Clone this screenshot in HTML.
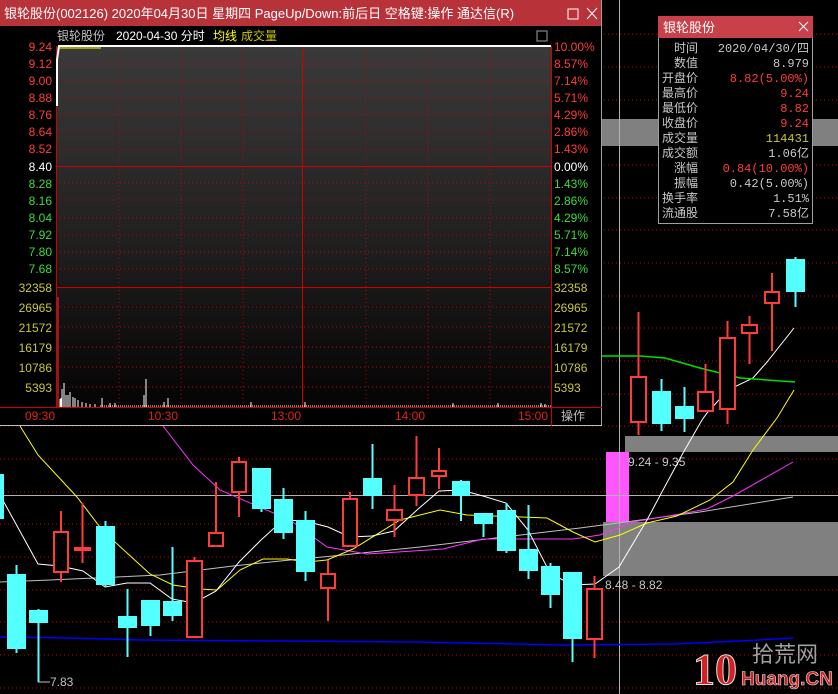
<!DOCTYPE html>
<html><head><meta charset="utf-8"><style>
html,body{margin:0;padding:0;background:#000;}
svg{display:block;font-family:"Liberation Sans","Noto Sans CJK SC",sans-serif;}
</style></head><body>
<svg width="838" height="694" viewBox="0 0 838 694" xmlns="http://www.w3.org/2000/svg">
<rect width="838" height="694" fill="#000"/>
<!-- background dotted grid -->
<g stroke="#c00000" stroke-dasharray="1,3" stroke-width="1">
<line x1="0" y1="34" x2="838" y2="34"/><line x1="0" y1="67" x2="838" y2="67"/><line x1="0" y1="100" x2="838" y2="100"/>
<line x1="0" y1="132" x2="838" y2="132"/><line x1="0" y1="165" x2="838" y2="165"/><line x1="0" y1="198" x2="838" y2="198"/>
<line x1="0" y1="230" x2="838" y2="230"/><line x1="0" y1="263" x2="838" y2="263"/><line x1="0" y1="296" x2="838" y2="296"/>
<line x1="0" y1="328" x2="838" y2="328"/><line x1="0" y1="361" x2="838" y2="361"/><line x1="0" y1="394" x2="838" y2="394"/>
<line x1="0" y1="426" x2="838" y2="426"/><line x1="0" y1="459" x2="838" y2="459"/><line x1="0" y1="492" x2="838" y2="492"/>
<line x1="0" y1="524" x2="838" y2="524"/><line x1="0" y1="557" x2="838" y2="557"/><line x1="0" y1="590" x2="838" y2="590"/>
<line x1="0" y1="622" x2="838" y2="622"/><line x1="0" y1="655" x2="838" y2="655"/><line x1="0" y1="688" x2="838" y2="688"/>
</g>
<!-- gray boxes -->
<rect x="600" y="119" width="238" height="27" fill="#808080"/>
<rect x="625" y="436" width="213" height="16" fill="#808080"/>
<rect x="603" y="522" width="235" height="54" fill="#808080"/>
<rect x="606" y="452" width="23" height="70" fill="#ff55ff"/>
<!-- crosshair -->
<line x1="0" y1="495.5" x2="838" y2="495.5" stroke="#b0b0b0" stroke-width="1"/>
<line x1="619.5" y1="0" x2="619.5" y2="694" stroke="#b0b0b0" stroke-width="1"/>
<text x="628" y="466" fill="#c8c8c8" font-size="12">9.24 - 9.35</text>
<text x="605" y="589" fill="#c8c8c8" font-size="12">8.48 - 8.82</text>
<!-- MA lines -->
<polyline fill="none" stroke="#0000ff" stroke-width="1.5" points="0,637 70,638 140,640 280,641 420,642 562,645 673,644 740,641 793,638"/>
<polyline fill="none" stroke="#c0c0c0" stroke-width="1" points="0,582 50,580 160,575 233,566 290,560 333,556 420,547 580,528 633,521 700,512 793,497"/>
<polyline fill="none" stroke="#ff33ff" stroke-width="1" points="163,426 193,465 220,490 257,506 290,520 327,547 367,554 443,549 483,539 573,539 600,535 633,522 680,514 707,509 733,496 793,462"/>
<polyline fill="none" stroke="#ffff00" stroke-width="1" points="20,426 38,455 77,497 103,531 150,574 173,585 200,589 217,590 240,570 263,559 287,559 307,562 327,560 353,549 400,520 440,510 467,515 547,518 573,532 595,542 620,535 647,523 677,516 710,500 733,482 753,450 777,418 794,390"/>
<polyline fill="none" stroke="#ffffff" stroke-width="1" points="0,495 38,564 60,566 83,571 105,587 127,583 150,583 172,599 194,603 216,591 239,562 261,540 283,520 305,521 328,527 350,537 372,536 394,531 417,510 439,491 461,490 483,496 506,503 528,530 550,573 572,585 595,584 619,567 647,520 663,490 683,453 702,420 707,413 728,390 753,378 767,362 794,328"/>
<polyline fill="none" stroke="#00e000" stroke-width="1.5" points="602,356 640,356 665,358 700,368 740,378 795,382"/>
<!-- candles cyan -->
<g stroke="#54ffff" stroke-width="2" fill="#54ffff">
<line x1="2" y1="475" x2="2" y2="518"/><rect x="0" y="475" width="3" height="43"/>
<line x1="16.5" y1="565" x2="16.5" y2="653"/><rect x="8" y="575" width="17" height="73"/>
<line x1="38.5" y1="609" x2="38.5" y2="682"/><rect x="30" y="611" width="17" height="11"/>
<line x1="105.5" y1="521" x2="105.5" y2="587"/><rect x="97" y="527" width="17" height="57"/>
<line x1="127.5" y1="589" x2="127.5" y2="657"/><rect x="119" y="617" width="17" height="10"/>
<line x1="150.5" y1="601" x2="150.5" y2="636"/><rect x="142" y="601" width="17" height="24"/>
<line x1="172.5" y1="547" x2="172.5" y2="621"/><rect x="164" y="602" width="17" height="13"/>
<line x1="261.5" y1="469" x2="261.5" y2="512"/><rect x="253" y="469" width="17" height="39"/>
<line x1="283.5" y1="488" x2="283.5" y2="539"/><rect x="275" y="500" width="17" height="32"/>
<line x1="305.5" y1="511" x2="305.5" y2="581"/><rect x="297" y="521" width="17" height="50"/>
<line x1="372.5" y1="444" x2="372.5" y2="509"/><rect x="364" y="479" width="17" height="16"/>
<line x1="461" y1="480" x2="461" y2="521"/><rect x="453" y="482" width="16" height="13"/>
<line x1="483.5" y1="514" x2="483.5" y2="537"/><rect x="475" y="514" width="17" height="9"/>
<line x1="506.5" y1="503" x2="506.5" y2="553"/><rect x="498" y="511" width="17" height="39"/>
<line x1="528.5" y1="505" x2="528.5" y2="579"/><rect x="520" y="550" width="17" height="20"/>
<line x1="550.5" y1="563" x2="550.5" y2="608"/><rect x="542" y="567" width="17" height="27"/>
<line x1="572.5" y1="573" x2="572.5" y2="662"/><rect x="564" y="573" width="17" height="65"/>
<line x1="661.5" y1="379" x2="661.5" y2="431"/><rect x="653" y="392" width="17" height="31"/>
<line x1="684.5" y1="387" x2="684.5" y2="432"/><rect x="676" y="407" width="17" height="11"/>
<line x1="795.5" y1="257" x2="795.5" y2="307"/><rect x="787" y="260" width="17" height="31"/>
</g>
<!-- candles red -->
<g stroke="#ff3c3c" stroke-width="2" fill="#000">
<line x1="61" y1="511" x2="61" y2="582"/><rect x="54" y="532" width="14" height="40"/>
<line x1="82.5" y1="503" x2="82.5" y2="563"/><rect x="75" y="548" width="15" height="2"/>
<line x1="194.5" y1="557" x2="194.5" y2="638"/><rect x="187" y="561" width="15" height="76"/>
<line x1="216" y1="482" x2="216" y2="547"/><rect x="209" y="533" width="14" height="13"/>
<line x1="239" y1="457" x2="239" y2="517"/><rect x="232" y="462" width="14" height="30"/>
<line x1="328" y1="560" x2="328" y2="621"/><rect x="321" y="574" width="14" height="14"/>
<line x1="350" y1="492" x2="350" y2="547"/><rect x="343" y="499" width="14" height="47"/>
<line x1="394.5" y1="485" x2="394.5" y2="537"/><rect x="387" y="510" width="15" height="10"/>
<line x1="416.5" y1="436" x2="416.5" y2="506"/><rect x="409" y="478" width="15" height="17"/>
<line x1="439" y1="448" x2="439" y2="489"/><rect x="432" y="471" width="14" height="5"/>
<line x1="594.5" y1="576" x2="594.5" y2="658"/><rect x="587" y="589" width="15" height="50"/>
<line x1="638.5" y1="312" x2="638.5" y2="435"/><rect x="631" y="377" width="15" height="45"/>
<line x1="705.5" y1="364" x2="705.5" y2="412"/><rect x="698" y="392" width="15" height="19"/>
<line x1="727.5" y1="321" x2="727.5" y2="424"/><rect x="720" y="338" width="15" height="71"/>
<line x1="749.5" y1="316" x2="749.5" y2="364"/><rect x="742" y="325" width="15" height="8"/>
<line x1="772" y1="273" x2="772" y2="351"/><rect x="765" y="292" width="14" height="11"/>
</g>
<line x1="38" y1="682" x2="50" y2="682" stroke="#c0c0c0"/>
<text x="50" y="686" fill="#c0c0c0" font-size="12">7.83</text>
<!-- watermark -->
<text x="693" y="684" fill="#d42020" font-size="44" font-weight="bold" font-family="Liberation Serif,serif" stroke="#e0e0e0" stroke-width="1">10</text>
<text x="752" y="662" fill="#a0a0a0" font-size="22" font-family="Noto Sans CJK SC,sans-serif">拾荒网</text>
<text x="741" y="685" fill="#d42020" font-size="19" font-weight="bold" stroke="#e0e0e0" stroke-width="0.6">Huang.CN</text>

<!-- popup window -->
<defs><linearGradient id="g" x1="0" y1="0" x2="0" y2="1">
<stop offset="0" stop-color="#3a3a3a"/><stop offset="0.5" stop-color="#222"/><stop offset="1" stop-color="#040404"/></linearGradient></defs>
<rect x="0" y="0" width="602" height="426" fill="#000"/>
<rect x="0" y="0" width="602" height="26" fill="#b8323a"/>
<text x="4" y="18" fill="#fff" font-size="13">银轮股份(002126) 2020年04月30日 星期四 PageUp/Down:前后日 空格键:操作 通达信(R)</text>
<rect x="568" y="9" width="10" height="10" fill="none" stroke="#fff"/>
<path d="M587 8 L597 19 M597 8 L587 19" stroke="#fff"/>
<line x1="601.5" y1="0" x2="601.5" y2="426" stroke="#a0a0a0"/>
<line x1="0" y1="425.5" x2="602" y2="425.5" stroke="#c0c0c0"/>
<text x="57" y="40" fill="#c0c0c0" font-size="12">银轮股份</text>
<text x="116" y="40" fill="#fff" font-size="12">2020-04-30 分时</text>
<text x="213" y="40" fill="#ffff00" font-size="12">均线</text>
<text x="241" y="40" fill="#c8c800" font-size="12">成交量</text>
<rect x="537" y="31" width="10" height="10" fill="none" stroke="#a0a0a0"/>
<rect x="56" y="46" width="495" height="361" fill="url(#g)"/>
<g stroke="#c00000" stroke-dasharray="1,3">
<line x1="56" y1="64" x2="551" y2="64"/><line x1="56" y1="81" x2="551" y2="81"/><line x1="56" y1="98" x2="551" y2="98"/>
<line x1="56" y1="115" x2="551" y2="115"/><line x1="56" y1="132" x2="551" y2="132"/><line x1="56" y1="149" x2="551" y2="149"/>
<line x1="56" y1="183" x2="551" y2="183"/><line x1="56" y1="200" x2="551" y2="200"/><line x1="56" y1="218" x2="551" y2="218"/>
<line x1="56" y1="235" x2="551" y2="235"/><line x1="56" y1="252" x2="551" y2="252"/><line x1="56" y1="269" x2="551" y2="269"/>
<line x1="56" y1="307" x2="551" y2="307"/><line x1="56" y1="327" x2="551" y2="327"/><line x1="56" y1="347" x2="551" y2="347"/>
<line x1="56" y1="367" x2="551" y2="367"/><line x1="56" y1="387" x2="551" y2="387"/>
<line x1="119" y1="46" x2="119" y2="407"/><line x1="181" y1="46" x2="181" y2="407"/><line x1="243" y1="46" x2="243" y2="407"/>
<line x1="366" y1="46" x2="366" y2="407"/><line x1="428" y1="46" x2="428" y2="407"/><line x1="490" y1="46" x2="490" y2="407"/>
</g>
<g stroke="#d00000" stroke-width="1">
<line x1="56" y1="166.5" x2="551" y2="166.5"/><line x1="56" y1="287.5" x2="551" y2="287.5"/>
<line x1="0" y1="407.5" x2="602" y2="407.5"/>
<line x1="302.5" y1="46" x2="302.5" y2="407"/>
<line x1="56.5" y1="46" x2="56.5" y2="407"/>
<line x1="551.5" y1="46" x2="551.5" y2="426"/>
</g>
<polyline fill="none" stroke="#fff" stroke-width="2" points="57,106 57,60 59,46 551,46"/>
<line x1="59" y1="48" x2="101" y2="48" stroke="#ffff00"/>
<!-- volume bars -->
<line x1="58" y1="297" x2="58" y2="407" stroke="#ff3030"/>
<g stroke="#fff" stroke-width="1">
<line x1="60" y1="399" x2="60" y2="407"/><line x1="61" y1="398" x2="61" y2="407"/><line x1="62" y1="389" x2="62" y2="407"/>
<line x1="64" y1="383" x2="64" y2="407"/><line x1="66" y1="395" x2="66" y2="407"/><line x1="68" y1="395" x2="68" y2="407"/>
<line x1="70" y1="392" x2="70" y2="407"/><line x1="73" y1="397" x2="73" y2="407"/><line x1="75" y1="398" x2="75" y2="407"/>
<line x1="78" y1="400" x2="78" y2="407"/><line x1="82" y1="402" x2="82" y2="407"/><line x1="86" y1="403" x2="86" y2="407"/>
<line x1="90" y1="404" x2="90" y2="407"/><line x1="95" y1="404" x2="95" y2="407"/><line x1="102" y1="398" x2="102" y2="407"/>
<line x1="110" y1="403" x2="110" y2="407"/><line x1="115" y1="403" x2="115" y2="407"/><line x1="144" y1="395" x2="144" y2="407"/>
<line x1="146" y1="379" x2="146" y2="407"/><line x1="164" y1="402" x2="164" y2="407"/><line x1="168" y1="398" x2="168" y2="407"/>
<line x1="251" y1="402" x2="251" y2="407"/><line x1="305" y1="402" x2="305" y2="407"/><line x1="453" y1="403" x2="453" y2="407"/>
<line x1="498" y1="403" x2="498" y2="407"/><line x1="541" y1="403" x2="541" y2="407"/><line x1="545" y1="404" x2="545" y2="407"/>
</g>
<line x1="100" y1="406" x2="551" y2="406" stroke="#fff" stroke-dasharray="1,1"/>
<!-- axis labels -->
<g font-size="12" fill="#ff3c3c" text-anchor="end">
<text x="52" y="51">9.24</text><text x="52" y="68">9.12</text><text x="52" y="85">9.00</text><text x="52" y="102">8.88</text>
<text x="52" y="119">8.76</text><text x="52" y="136">8.64</text><text x="52" y="153">8.52</text>
<text x="52" y="171" fill="#fff">8.40</text>
<text x="52" y="188" fill="#3cdc3c">8.28</text><text x="52" y="205" fill="#3cdc3c">8.16</text><text x="52" y="222" fill="#3cdc3c">8.04</text>
<text x="52" y="239" fill="#3cdc3c">7.92</text><text x="52" y="256" fill="#3cdc3c">7.80</text><text x="52" y="273" fill="#3cdc3c">7.68</text>
<g fill="#c8c832"><text x="52" y="292">32358</text><text x="52" y="312">26965</text><text x="52" y="332">21572</text><text x="52" y="352">16179</text><text x="52" y="372">10786</text><text x="52" y="392">5393</text></g>
</g>
<g font-size="12" fill="#ff3c3c">
<text x="554" y="51">10.00%</text><text x="554" y="68">8.57%</text><text x="554" y="85">7.14%</text><text x="554" y="102">5.71%</text>
<text x="554" y="119">4.29%</text><text x="554" y="136">2.86%</text><text x="554" y="153">1.43%</text>
<text x="554" y="171" fill="#fff">0.00%</text>
<text x="554" y="188" fill="#3cdc3c">1.43%</text><text x="554" y="205" fill="#3cdc3c">2.86%</text><text x="554" y="222" fill="#3cdc3c">4.29%</text>
<text x="554" y="239" fill="#3cdc3c">5.71%</text><text x="554" y="256" fill="#3cdc3c">7.14%</text><text x="554" y="273" fill="#3cdc3c">8.57%</text>
<g fill="#c8c832"><text x="554" y="292">32358</text><text x="554" y="312">26965</text><text x="554" y="332">21572</text><text x="554" y="352">16179</text><text x="554" y="372">10786</text><text x="554" y="392">5393</text></g>
<g fill="#e02020" text-anchor="middle"><text x="40" y="420">09:30</text><text x="163" y="420">10:30</text><text x="286" y="420">13:00</text><text x="410" y="420">14:00</text><text x="533" y="420">15:00</text></g>
<text x="561" y="420" fill="#c0c0c0">操作</text>
</g>

<!-- info popup -->
<rect x="658.5" y="16.5" width="154" height="207" fill="#000" stroke="#a0a0a0"/>
<rect x="658" y="16" width="155" height="22" fill="#c8414a"/>
<text x="663" y="32" fill="#fff" font-size="13">银轮股份</text>
<path d="M799 22 L808 31 M808 22 L799 31" stroke="#fff"/>
<g font-size="12" fill="#c8c8c8">
<text x="698" y="52" text-anchor="end">时间</text><text x="698" y="67" text-anchor="end">数值</text>
<text x="662" y="82">开盘价</text><text x="662" y="97">最高价</text><text x="662" y="112">最低价</text><text x="662" y="127">收盘价</text>
<text x="662" y="142">成交量</text><text x="662" y="157">成交额</text>
<text x="698" y="172" text-anchor="end">涨幅</text><text x="698" y="187" text-anchor="end">振幅</text>
<text x="662" y="202">换手率</text><text x="662" y="217">流通股</text>
</g>
<g font-size="12" fill="#c8c8c8" text-anchor="end" font-family="Liberation Mono,Noto Sans CJK SC,monospace">
<text x="809" y="52">2020/04/30/四</text><text x="809" y="67">8.979</text>
<text x="809" y="82" fill="#ff3c3c">8.82(5.00%)</text><text x="809" y="97" fill="#ff3c3c">9.24</text>
<text x="809" y="112" fill="#ff3c3c">8.82</text><text x="809" y="127" fill="#ff3c3c">9.24</text>
<text x="809" y="142" fill="#c8c832">114431</text><text x="809" y="157">1.06亿</text>
<text x="809" y="172" fill="#ff3c3c">0.84(10.00%)</text><text x="809" y="187">0.42(5.00%)</text>
<text x="809" y="202">1.51%</text><text x="809" y="217">7.58亿</text>
</g>
</svg>
</body></html>
